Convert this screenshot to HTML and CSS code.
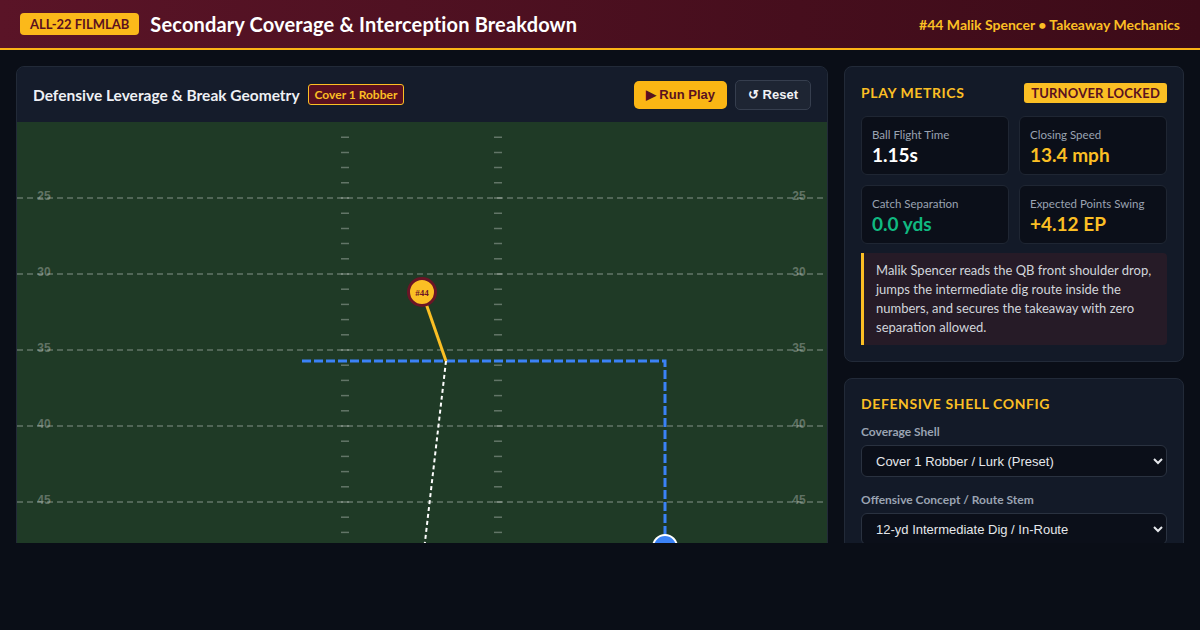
FILE: index.html
```html
<!DOCTYPE html>
<html lang="en">
<head>
    <meta charset="UTF-8">
    <meta name="viewport" content="width=device-width, initial-scale=1.0">
    <title>All-22 FilmLab</title>
    <link rel="stylesheet" href="styles.css">
</head>
<body>
    <header class="topbar">
        <div class="brand">
            <span class="brand-badge">ALL-22 FILMLAB</span>
            <h1 class="page-title">Secondary Coverage &amp; Interception Breakdown</h1>
        </div>
        <div class="player-tag">#44 Malik Spencer &bull; Takeaway Mechanics</div>
    </header>

    <main class="workspace">
        <section class="panel field-panel">
            <div class="field-head">
                <div class="field-title">
                    <h2>Defensive Leverage &amp; Break Geometry</h2>
                    <span class="shell-tag">Cover 1 Robber</span>
                </div>
                <div class="field-actions">
                    <button class="btn btn-run">&#9654; Run Play</button>
                    <button class="btn btn-reset">&#8634; Reset</button>
                </div>
            </div>

            <div class="field">
                <svg class="field-svg" viewBox="0 0 810 480" width="810" height="480">
                    <g id="hashes" stroke="rgba(255,255,255,0.3)" stroke-width="1.5"></g>
                    <g id="yardLines"></g>

                    <!-- route stem + break -->
                    <path d="M285 239 H648 V425" fill="none" stroke="#3b82f6" stroke-width="3" stroke-dasharray="9 3"/>
                    <!-- ball flight -->
                    <line x1="429" y1="239" x2="401" y2="480" stroke="#fff" stroke-width="2" stroke-dasharray="4 3"/>
                    <!-- defender break -->
                    <line x1="405" y1="170" x2="429" y2="239" stroke="#fbbf24" stroke-width="3"/>

                    <circle cx="648" cy="425" r="12" fill="#3b82f6" stroke="#fff" stroke-width="2"/>
                    <circle cx="405" cy="170" r="13.5" fill="#fbbf24" stroke="#6b1526" stroke-width="3"/>
                    <text x="405" y="173.5" class="defender-label">#44</text>
                </svg>
            </div>
        </section>

        <aside class="sidebar">
            <section class="panel side-panel">
                <div class="side-head">
                    <h3>PLAY METRICS</h3>
                    <span class="locked-tag">TURNOVER LOCKED</span>
                </div>
                <div class="metrics">
                    <div class="metric">
                        <div class="metric-label">Ball Flight Time</div>
                        <div class="metric-value">1.15s</div>
                    </div>
                    <div class="metric">
                        <div class="metric-label">Closing Speed</div>
                        <div class="metric-value gold">13.4 mph</div>
                    </div>
                    <div class="metric">
                        <div class="metric-label">Catch Separation</div>
                        <div class="metric-value green">0.0 yds</div>
                    </div>
                    <div class="metric">
                        <div class="metric-label">Expected Points Swing</div>
                        <div class="metric-value gold">+4.12 EP</div>
                    </div>
                </div>
                <p class="note">Malik Spencer reads the QB front shoulder drop, jumps the intermediate dig route inside the numbers, and secures the takeaway with zero separation allowed.</p>
            </section>

            <section class="panel side-panel">
                <div class="side-head plain">
                    <h3>DEFENSIVE SHELL CONFIG</h3>
                </div>
                <label class="field-label" for="shell">Coverage Shell</label>
                <select id="shell" class="picker">
                    <option>Cover 1 Robber / Lurk (Preset)</option>
                    <option>Cover 3 Sky</option>
                    <option>Quarters Match</option>
                </select>
                <label class="field-label" for="concept">Offensive Concept / Route Stem</label>
                <select id="concept" class="picker">
                    <option>12-yd Intermediate Dig / In-Route</option>
                    <option>Deep Post</option>
                </select>
            </section>
        </aside>
    </main>

    <script>
        var NS = 'http://www.w3.org/2000/svg';
        var YARD = 15.2;

        // hash ticks every yard
        var hashes = document.getElementById('hashes');
        for (var i = 1; i < 32; i++) {
            var y = i * YARD;
            [324, 477].forEach(function (x) {
                var t = document.createElementNS(NS, 'line');
                t.setAttribute('x1', x);
                t.setAttribute('x2', x + 8);
                t.setAttribute('y1', y);
                t.setAttribute('y2', y);
                hashes.appendChild(t);
            });
        }

        // yard lines every 5 with numbers
        var lines = document.getElementById('yardLines');
        for (var n = 25; n <= 45; n += 5) {
            var ly = (n - 20) * YARD;
            var l = document.createElementNS(NS, 'line');
            l.setAttribute('x1', 0);
            l.setAttribute('x2', 810);
            l.setAttribute('y1', ly);
            l.setAttribute('y2', ly);
            l.setAttribute('class', 'yard-line');
            lines.appendChild(l);

            [27, 782].forEach(function (x) {
                var txt = document.createElementNS(NS, 'text');
                txt.setAttribute('x', x);
                txt.setAttribute('y', ly + 2);
                txt.setAttribute('class', 'yard-num');
                txt.textContent = n;
                lines.appendChild(txt);
            });
        }
    </script>
</body>
</html>
```

FILE: styles.css
```css
* {
    box-sizing: border-box;
}

body {
    margin: 0;
    background: #0a0e17;
    color: #e5e7eb;
    font-family: 'Lato', 'Noto Sans', sans-serif;
}

h1, h2, h3, p {
    margin: 0;
}

.topbar {
    height: 50px;
    display: flex;
    align-items: center;
    justify-content: space-between;
    padding: 0 20px;
    background: linear-gradient(90deg, #5a1427 0%, #3c0b18 100%);
    border-bottom: 2px solid #fbb316;
}

.brand {
    display: flex;
    align-items: center;
    gap: 11px;
}

.brand-badge {
    background: #fbb91a;
    color: #5a1020;
    font-size: 13px;
    font-weight: 700;
    padding: 3px 10px;
    border-radius: 4px;
    line-height: 16px;
}

.page-title {
    font-size: 20px;
    font-weight: 700;
    letter-spacing: 0.15px;
    color: #fff;
}

.player-tag {
    color: #fbbf24;
    font-size: 14px;
    font-weight: 700;
}

.workspace {
    display: grid;
    grid-template-columns: 1fr 340px;
    gap: 16px;
    padding: 16px 16px 0;
    height: 493px;
    overflow: hidden;
    align-items: start;
}

.panel {
    background: #131a28;
    border: 1px solid #222a38;
    border-radius: 8px;
}

.field-panel {
    overflow: hidden;
    height: 520px;
}

.field-head {
    height: 55px;
    display: flex;
    align-items: center;
    justify-content: space-between;
    padding: 0 16px;
    background: #151c2b;
}

.field-title {
    display: flex;
    align-items: center;
    gap: 8px;
}

.field-title h2 {
    font-size: 15.5px;
    font-weight: 700;
    color: #eef0f4;
}

.shell-tag {
    font-size: 12px;
    font-weight: 700;
    color: #fbbf24;
    background: #5a1020;
    border: 1px solid #fbbf24;
    border-radius: 3px;
    padding: 2px 6px;
}

.field-actions {
    display: flex;
    align-items: center;
    gap: 8px;
}

.btn {
    font-family: 'Liberation Sans', Arial, sans-serif;
    font-size: 13px;
    font-weight: 700;
    border-radius: 5px;
    cursor: pointer;
}

.btn-run {
    background: #fbb614;
    color: #5a1020;
    border: none;
    padding: 6px 12px;
    height: 28px;
}

.btn-reset {
    background: #1e2533;
    color: #f1f3f6;
    border: 1px solid #363e4e;
    padding: 6px 12px;
    height: 30px;
}

.field {
    background: #1f3a26;
    height: 480px;
}

.field-svg {
    display: block;
}

.yard-line {
    stroke: rgba(255, 255, 255, 0.3);
    stroke-width: 1.5;
    stroke-dasharray: 6 4;
}

.yard-num {
    fill: rgba(255, 255, 255, 0.3);
    font-family: 'Liberation Sans', Arial, sans-serif;
    font-size: 12px;
    font-weight: 700;
    text-anchor: middle;
}

.defender-label {
    fill: #6b1526;
    font-family: 'Liberation Serif', serif;
    font-size: 9px;
    font-weight: 700;
    text-anchor: middle;
}

.sidebar {
    display: flex;
    flex-direction: column;
    gap: 16px;
}

.side-panel {
    padding: 16px;
}

.side-head {
    display: flex;
    align-items: center;
    justify-content: space-between;
    height: 20px;
    margin-bottom: 13px;
}

.side-head.plain {
    height: 18px;
    margin-bottom: 11px;
}

.side-head h3 {
    font-size: 14px;
    font-weight: 700;
    letter-spacing: 0.6px;
    line-height: 18px;
    color: #fbbf24;
}

.locked-tag {
    background: #fbbf24;
    color: #5a1020;
    font-size: 13px;
    font-weight: 700;
    letter-spacing: 0.2px;
    line-height: 14px;
    padding: 3px 7px;
    border-radius: 3px;
}

.metrics {
    display: grid;
    grid-template-columns: 1fr 1fr;
    gap: 10px;
}

.metric {
    background: #0b0f19;
    border: 1px solid #1f2633;
    border-radius: 6px;
    padding: 10px 10px 9px;
    height: 59px;
}

.metric-label {
    font-size: 11.5px;
    color: #9aa3b2;
    line-height: 15px;
}

.metric-value {
    font-size: 19px;
    font-weight: 700;
    color: #fff;
    line-height: 24px;
    margin-top: 1px;
}

.metric-value.gold {
    color: #fbbf24;
}

.metric-value.green {
    color: #10b981;
}

.note {
    margin-top: 9px;
    background: #261b27;
    border-left: 3px solid #fbbf24;
    border-radius: 0 4px 4px 0;
    padding: 8px 12px 8px 12px;
    font-size: 13px;
    line-height: 19px;
    color: #d1d5db;
}

.field-label {
    display: block;
    font-size: 12px;
    font-weight: 700;
    line-height: 15px;
    color: #9aa3b2;
    margin: 0 0 6px;
}

.picker {
    display: block;
    width: 100%;
    height: 32px;
    margin-bottom: 15px;
    padding: 0 10px;
    background: #0b0f19;
    color: #e5e7eb;
    border: 1px solid #2a3240;
    border-radius: 6px;
    font-family: 'Liberation Sans', Arial, sans-serif;
    font-size: 13px;
}
```
